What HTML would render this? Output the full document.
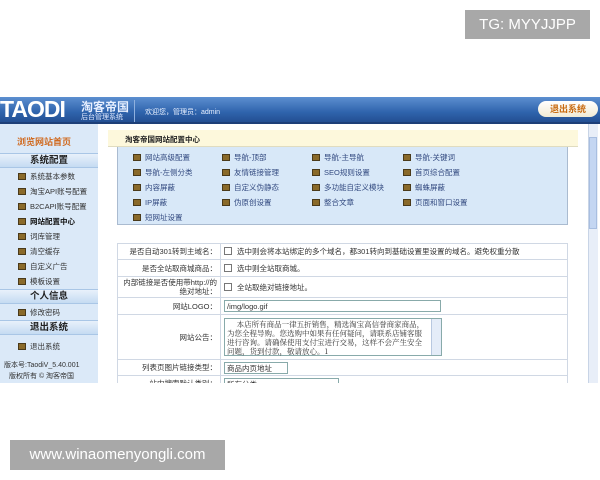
<!DOCTYPE html><html><head><meta charset="utf-8"><style>
*{margin:0;padding:0;box-sizing:border-box}
body{width:600px;height:480px;background:#fff;position:relative;overflow:hidden;font-family:"Liberation Sans","Noto Sans CJK SC",sans-serif;font-size:8px;color:#333}
.a{position:absolute;white-space:nowrap}
.hd{left:0;top:97px;width:600px;height:27px;background:linear-gradient(180deg,#5c8fd0,#2f64ad 60%,#234f92);border-bottom:2px solid #1d3f78}
.sb{left:0;top:124px;width:98px;height:259px;background:#dbe9f8}
.bar{left:0;width:98px;height:15px;background:linear-gradient(#e8f1fb,#c5dbf2);border-top:1px solid #a9c6e6;border-bottom:1px solid #a9c6e6;text-align:center;font-weight:bold;font-size:9.5px;color:#222;line-height:13px}
.it{left:18px;font-size:7.5px;color:#333}
.it:before{content:"";display:inline-block;width:6px;height:5px;background:#8a6a2a;border:1px solid #4a3a1a;margin-right:4px;vertical-align:-1px}
.lk{font-size:7.5px;color:#334a80}
.lk:before{content:"";display:inline-block;width:6px;height:5px;background:#8a6a2a;border:1px solid #4a3a1a;margin-right:4px;vertical-align:-1px}
table{position:absolute;left:117px;top:243px;width:451px;border-collapse:collapse;font-size:7.5px}
td{border:1px solid #d0d8e4;padding:0 3px;vertical-align:middle}
td.l{width:103px;text-align:right;color:#333}
.cb{display:inline-block;width:8px;height:8px;border:1px solid #777;background:#fff;margin-right:5px;vertical-align:-1px}
.in{display:inline-block;border:1px solid #8aa;height:12px;line-height:11px;padding-left:2px;background:#fff}
</style></head><body>
<div class="a" style="left:465px;top:10px;width:125px;height:29px;background:#a8a8a8;color:#fff;font-size:15px;line-height:29px;text-align:center">TG: MYYJJPP</div>
<div class="a hd"></div>
<div class="a" style="left:0;top:95px;font-size:23px;font-weight:bold;color:#fff;letter-spacing:-1px;line-height:28px">TAODI</div>
<div class="a" style="left:81px;top:98px;font-size:12px;font-weight:bold;color:#e8f0ff">淘客帝国</div>
<div class="a" style="left:81px;top:112px;font-size:7px;color:#dfe9ff">后台管理系统</div>
<div class="a" style="left:134px;top:100px;width:1px;height:22px;background:#8fb0de"></div>
<div class="a" style="left:145px;top:107px;font-size:7px;color:#e8f0ff">欢迎您，管理员：admin</div>
<div class="a" style="left:538px;top:101px;width:60px;height:16px;border-radius:8px;background:linear-gradient(#fff,#f1ead4);color:#c86a10;font-size:9px;font-weight:bold;line-height:16px;text-align:center">退出系统</div>
<div class="a sb"></div>
<div class="a" style="left:17px;top:135px;font-size:9px;font-weight:bold;color:#d06a20">浏览网站首页</div>
<div class="a bar" style="top:153px">系统配置</div>
<div class="a it" style="top:171px">系统基本参数</div>
<div class="a it" style="top:186px">淘宝API账号配置</div>
<div class="a it" style="top:201px">B2CAPI账号配置</div>
<div class="a it" style="top:216px;font-weight:bold;color:#111">网站配置中心</div>
<div class="a it" style="top:231px">词库管理</div>
<div class="a it" style="top:246px">清空缓存</div>
<div class="a it" style="top:261px">自定义广告</div>
<div class="a it" style="top:276px">模板设置</div>
<div class="a bar" style="top:289px">个人信息</div>
<div class="a it" style="top:307px">修改密码</div>
<div class="a bar" style="top:320px">退出系统</div>
<div class="a it" style="top:341px">退出系统</div>
<div class="a" style="left:4px;top:360px;font-size:7px">版本号:TaodiV_5.40.001</div>
<div class="a" style="left:9px;top:371px;font-size:7px">版权所有 © 淘客帝国</div>
<div class="a" style="left:108px;top:130px;width:470px;height:17px;background:#fdf8dc;border-bottom:1px solid #e0dcc0"></div>
<div class="a" style="left:125px;top:134px;font-size:7.5px;font-weight:bold;color:#222">淘客帝国网站配置中心</div>
<div class="a" style="left:117px;top:147px;width:451px;height:78px;background:#d8e8f8;border:1px solid #aabbd0;border-top:none"></div>
<div class="a lk" style="left:133px;top:152px">网站高级配置</div><div class="a lk" style="left:222px;top:152px">导航-顶部</div><div class="a lk" style="left:312px;top:152px">导航-主导航</div><div class="a lk" style="left:403px;top:152px">导航-关键词</div>
<div class="a lk" style="left:133px;top:167px">导航-左侧分类</div><div class="a lk" style="left:222px;top:167px">友情链接管理</div><div class="a lk" style="left:312px;top:167px">SEO规则设置</div><div class="a lk" style="left:403px;top:167px">首页综合配置</div>
<div class="a lk" style="left:133px;top:182px">内容屏蔽</div><div class="a lk" style="left:222px;top:182px">自定义伪静态</div><div class="a lk" style="left:312px;top:182px">多功能自定义模块</div><div class="a lk" style="left:403px;top:182px">蜘蛛屏蔽</div>
<div class="a lk" style="left:133px;top:197px">IP屏蔽</div><div class="a lk" style="left:222px;top:197px">伪原创设置</div><div class="a lk" style="left:312px;top:197px">整合文章</div><div class="a lk" style="left:403px;top:197px">页面和窗口设置</div>
<div class="a lk" style="left:133px;top:212px">短网址设置</div>
<table>
<tr style="height:16px"><td class="l">是否自动301转到主域名：</td><td><span class="cb"></span>选中则会将本站绑定的多个域名，都301转向到基础设置里设置的域名。避免权重分散</td></tr>
<tr style="height:17px"><td class="l">是否全站取商城商品：</td><td><span class="cb"></span>选中则全站取商城。</td></tr>
<tr style="height:21px"><td class="l" style="line-height:9px">内部链接是否使用带http://的<br>绝对地址：</td><td><span class="cb"></span>全站取绝对链接地址。</td></tr>
<tr style="height:17px"><td class="l">网站LOGO：</td><td><span class="in" style="width:217px">/img/logo.gif</span></td></tr>
<tr style="height:45px"><td class="l">网站公告：</td><td><div style="position:relative;width:218px;height:38px;border:1px solid #8aa;background:#fff;font-size:7.5px;line-height:9px;padding:1px 14px 0 2px;font-family:'Noto Serif CJK SC',serif">&nbsp;&nbsp;&nbsp;&nbsp;&nbsp;本店所有商品一律五折销售，精选淘宝高信誉商家商品，为您全程导购。您选购中如果有任何疑问，请联系店铺客服进行咨询。请确保使用支付宝进行交易，这样不会产生安全问题，货到付款，敬请放心。1<div style="position:absolute;right:0;top:0;width:10px;height:36px;background:#e4ecf8;border-left:1px solid #b8c8e0"></div></div></td></tr>
<tr style="height:16px"><td class="l">列表页图片链接类型：</td><td><span class="in" style="width:64px">商品内页地址</span></td></tr>
<tr style="height:16px"><td class="l">站内搜索默认类别：</td><td><span class="in" style="width:115px">所有分类</span></td></tr>
</table>
<div class="a" style="left:98px;top:383px;width:502px;height:97px;background:#fff"></div>
<div class="a" style="left:588px;top:124px;width:10px;height:259px;background:#e8eef8;border-left:1px solid #c8d4e6"></div>
<div class="a" style="left:589px;top:137px;width:8px;height:92px;background:#c4d6f2;border:1px solid #a8bee0"></div>
<div class="a" style="left:10px;top:440px;width:215px;height:30px;background:#a8a8a8;color:#fff;font-size:15px;line-height:30px;text-align:center">www.winaomenyongli.com</div>
</body></html>
